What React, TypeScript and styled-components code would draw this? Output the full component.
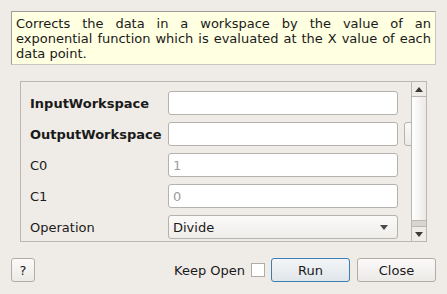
import React from 'react';
import styled, { createGlobalStyle } from 'styled-components';

const GlobalStyle = createGlobalStyle`
    html, body {
        margin: 0;
        padding: 0;
        background: #efebe7;
    }
    body {
        font-family: 'DejaVu Sans', 'Liberation Sans', sans-serif;
        font-size: 13px;
        color: #1a1a1a;
    }
`;

const Dialog = styled.div`
    width: 447px;
    height: 294px;
    box-sizing: border-box;
    padding: 11px 11px 12px;
    display: flex;
    flex-direction: column;
    gap: 16px;
    background: #efebe7;
`;

const Description = styled.div`
    height: 54px;
    box-sizing: border-box;
    padding: 4px 4px 0 4px;
    background: #ffffe1;
    border: 1px solid #c9c6c1;
    border-top-color: #9f9d99;
    border-left-color: #9f9d99;
    line-height: 15px;
    text-align: justify;
`;

const Frame = styled.div`
    margin: 0 9px;
    height: 161px;
    box-sizing: border-box;
    border: 1px solid #bab6b1;
    display: flex;
    overflow: hidden;
`;

const Viewport = styled.div`
    flex: 1;
    overflow: hidden;
    padding: 9px 0 0 9px;
    display: flex;
    flex-direction: column;
    gap: 7px;
`;

const Row = styled.div`
    display: grid;
    grid-template-columns: 132px 230px 30px;
    column-gap: 6px;
    align-items: center;
    height: 24px;
`;

const Label = styled.span<{ $required?: boolean }>`
    font-weight: ${({ $required }) => ($required ? 'bold' : 'normal')};
    white-space: nowrap;
`;

const Field = styled.div<{ $muted?: boolean }>`
    height: 24px;
    box-sizing: border-box;
    border: 1px solid #b5b1ac;
    border-radius: 3px;
    background: #ffffff;
    padding: 0 4px;
    display: flex;
    align-items: center;
    color: ${({ $muted }) => ($muted ? '#9c9c9c' : '#1a1a1a')};
`;

const Combo = styled(Field)`
    justify-content: space-between;
    background: linear-gradient(#fbfaf9, #efedea);
    padding: 0 9px 0 4px;
`;

const Arrow = styled.span`
    width: 0;
    height: 0;
    border-left: 4px solid transparent;
    border-right: 4px solid transparent;
    border-top: 5px solid #4a4a4a;
`;

const SideButton = styled.div`
    height: 24px;
    box-sizing: border-box;
    border: 1px solid #b5b1ac;
    border-radius: 3px;
    background: linear-gradient(#fbfaf9, #eceae7);
`;

const ScrollBar = styled.div`
    width: 14px;
    border-left: 1px solid #bab6b1;
    display: flex;
    flex-direction: column;
`;

const ScrollStep = styled.div<{ $up?: boolean }>`
    height: 14px;
    display: flex;
    align-items: center;
    justify-content: center;
    background: #efebe7;
    &::after {
        content: '';
        border-left: 4px solid transparent;
        border-right: 4px solid transparent;
        ${({ $up }) => ($up ? 'border-bottom: 5px solid #3a3a3a;' : 'border-top: 5px solid #3a3a3a;')}
    }
`;

const Handle = styled.div`
    flex: 1;
    border-top: 1px solid #bab6b1;
    border-bottom: 1px solid #bab6b1;
    background: linear-gradient(to right, #ffffff, #ebe9e6);
`;

const Groove = styled.div`
    height: 5px;
    background: #d8d5d1;
    border-bottom: 1px solid #bab6b1;
`;

const Footer = styled.div`
    display: flex;
    align-items: center;
    height: 24px;
`;

const Actions = styled.div`
    display: flex;
    gap: 7px;
`;

const Button = styled.button<{ $default?: boolean; $w: number }>`
    width: ${({ $w }) => $w}px;
    height: 24px;
    box-sizing: border-box;
    font: inherit;
    color: #1a1a1a;
    border: 1px solid ${({ $default }) => ($default ? '#3c7eb4' : '#b0aca7')};
    border-radius: 3px;
    background: ${({ $default }) =>
        $default ? 'linear-gradient(#f3f5f7, #e1e6eb)' : 'linear-gradient(#fbfaf9, #eceae7)'};
    padding: 0;
`;

const Spacer = styled.div`
    flex: 1;
`;

const KeepOpen = styled.label`
    display: flex;
    align-items: center;
    gap: 6px;
    margin-right: 6px;
`;

const Check = styled.span`
    width: 14px;
    height: 14px;
    box-sizing: border-box;
    border: 1px solid #b0aca7;
    background: #ffffff;
`;

const App: React.FC = () => (
    <>
        <GlobalStyle />
        <Dialog>
            <Description>
                Corrects the data in a workspace by the value of an exponential function which is evaluated at
                the X value of each data point.
            </Description>
            <Frame>
                <Viewport>
                    <Row>
                        <Label $required>InputWorkspace</Label>
                        <Field />
                    </Row>
                    <Row>
                        <Label $required>OutputWorkspace</Label>
                        <Field />
                        <SideButton />
                    </Row>
                    <Row>
                        <Label>C0</Label>
                        <Field $muted>1</Field>
                    </Row>
                    <Row>
                        <Label>C1</Label>
                        <Field $muted>0</Field>
                    </Row>
                    <Row>
                        <Label>Operation</Label>
                        <Combo>
                            Divide
                            <Arrow />
                        </Combo>
                    </Row>
                </Viewport>
                <ScrollBar>
                    <ScrollStep $up />
                    <Handle />
                    <Groove />
                    <ScrollStep />
                </ScrollBar>
            </Frame>
            <Footer>
                <Button $w={24}>?</Button>
                <Spacer />
                <KeepOpen>
                    Keep Open
                    <Check />
                </KeepOpen>
                <Actions>
                    <Button $default $w={79}>Run</Button>
                    <Button $w={79}>Close</Button>
                </Actions>
            </Footer>
        </Dialog>
    </>
);

export default App;
